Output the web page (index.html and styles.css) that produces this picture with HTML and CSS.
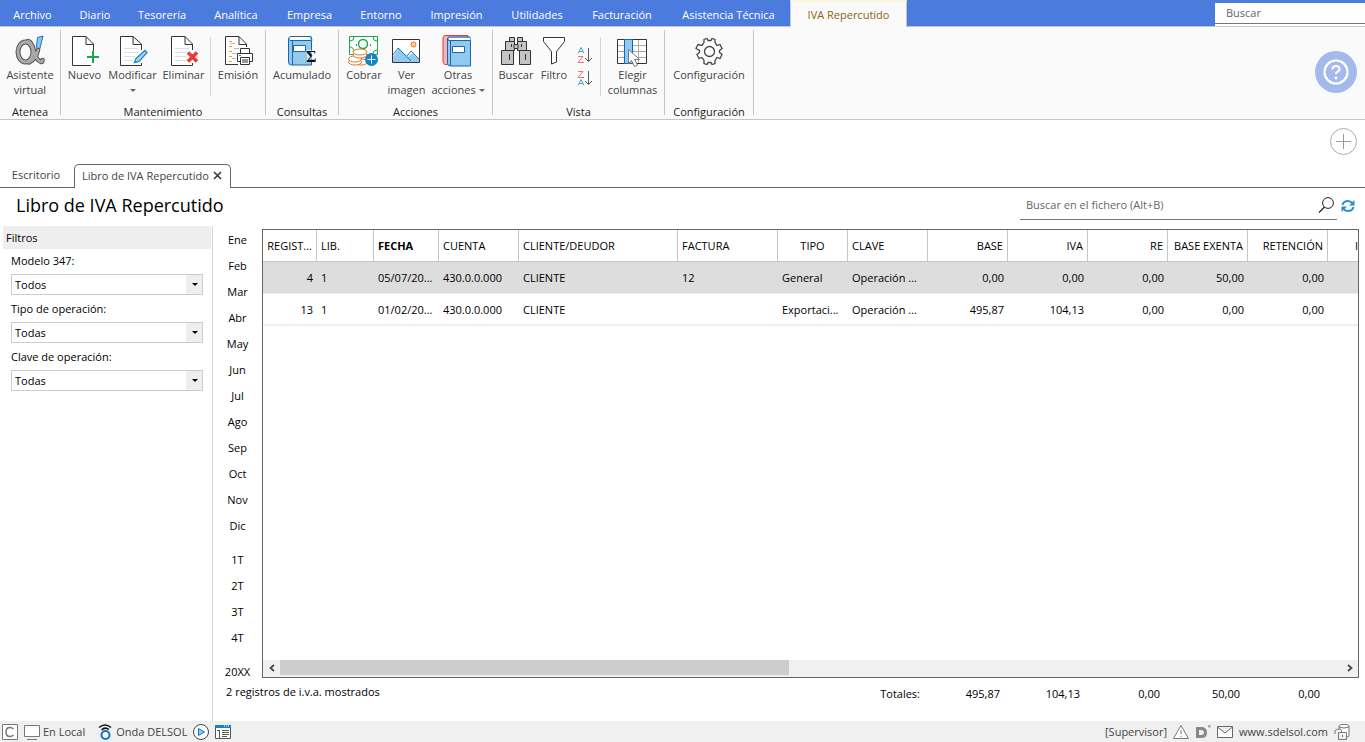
FILE: index.html
```html
<!DOCTYPE html>
<html lang="es">
<head>
<meta charset="utf-8">
<title>Libro de IVA Repercutido</title>
<link rel="stylesheet" href="styles.css">
</head>
<body>
<header class="topbar">
  <nav class="menu">
    <button class="menu-item">Archivo</button>
    <button class="menu-item">Diario</button>
    <button class="menu-item">Tesorería</button>
    <button class="menu-item">Analítica</button>
    <button class="menu-item">Empresa</button>
    <button class="menu-item">Entorno</button>
    <button class="menu-item">Impresión</button>
    <button class="menu-item">Utilidades</button>
    <button class="menu-item">Facturación</button>
    <button class="menu-item">Asistencia Técnica</button>
    <button class="menu-item menu-active">IVA Repercutido</button>
  </nav>
  <input class="top-search" type="text" placeholder="Buscar" aria-label="Buscar">
</header>

<section class="ribbon">
  <div class="group">
    <div class="tools tools-atenea">
      <button class="tool">
        <svg class="icon" viewBox="13 35 32 32"><path d="M36.500 37.500l5.500-1.500-4 16-2.500-5z" fill="#8fc9f0" stroke="#1b75bb"/><g fill="none" stroke-linecap="round"><ellipse cx="24.500" cy="52" rx="7.500" ry="10" stroke="#555" stroke-width="5"/><path d="M27 41q4 1 6 10t7 11q1.500 0 1.500-2M37 50q-2 9-9 12.500" stroke="#555" stroke-width="4.500"/><ellipse cx="24.500" cy="52" rx="7.500" ry="10" stroke="#aaa" stroke-width="3"/><path d="M27 41q4 1 6 10t7 11q1.500 0 1.500-2M37 50q-2 9-9 12.500" stroke="#aaa" stroke-width="2.500"/></g></svg>
        <span>Asistente<br>virtual</span>
      </button>
    </div>
    <h2 class="group-name">Atenea</h2>
  </div>

  <div class="group">
    <div class="tools tools-edit">
      <button class="tool">
        <svg class="icon" viewBox="69 35 32 32"><path d="M91 65.500H72.500V36.500H86L93.500 44V51M86 36.500V44.500H93.500" fill="#fff" stroke="#333"/><path d="M93 51v12M87 57h12" stroke="#17a84b" stroke-width="2"/></svg>
        <span>Nuevo</span>
      </button>
      <button class="tool">
        <svg class="icon" viewBox="116 35 32 32"><path d="M140.500 63V65.500H119.500V36.500H132L140.500 44V50M132 36.500V44.500H140" fill="#fff" stroke="#333"/><path d="M123 48.500h14M123 52.500h14M123 56.500h11M123 60.500h9" stroke="#ddd"/><path d="M133.500 62.500l1.500-4 9-8 2 2-8 9z" fill="#a8d8f5" stroke="#2387c8" stroke-width="1.300"/></svg>
        <span>Modificar</span>
        <i class="caret"></i>
      </button>
      <button class="tool">
        <svg class="icon" viewBox="167 35 32 32"><path d="M191.500 63V65.500H170.500V36.500H184L191.500 44V50M184 36.500V44.500H191" fill="#fff" stroke="#333"/><path d="M174 48.500h14M174 52.500h12M174 56.500h11M174 60.500h12" stroke="#ddd"/><path d="M187 52.500l9 9M196 52.500l-9 9" stroke="#ed3833" stroke-width="3.500"/></svg>
        <span>Eliminar</span>
      </button>
      <i class="divider"></i>
      <button class="tool">
        <svg class="icon" viewBox="222 35 32 32"><path d="M238 64.500H225.500V36.500H239L246.500 44V47M239 36.500V44.500H246" fill="#fff" stroke="#333"/><path d="M229 41.500h3M229 46.500h3M229 51.500h3M229 56.500h3M229 61.500h3" stroke="#f59a23"/><path d="M230 43.500h5M234 48.500h5M232 53.500h5M232 58.500h4" stroke="#bbb"/><path d="M240.500 53V48.500h9V53M240 61.500h-2.500v-8h15v8H250" fill="#fff" stroke="#333"/><path d="M240.500 57.500h9v7h-9zM242 60h6M242 62h6" fill="#fff" stroke="#333"/><path d="M239 55.500h2" stroke="#2387c8"/></svg>
        <span>Emisión</span>
      </button>
    </div>
    <h2 class="group-name">Mantenimiento</h2>
  </div>

  <div class="group">
    <div class="tools tools-single">
      <button class="tool">
        <svg class="icon" viewBox="287 35 32 32"><path d="M289.500 39V62q0 3 3 3H312.500V40.500H291q-2-1-1-3l1-1H312l1 4" fill="#91c9ef" stroke="#1b67ad"/><path d="M291 37h20v3h-20z" fill="#fff"/><path d="M293.500 40v25M294.500 45.500h12v6h-12z" fill="#fff" stroke="#1b67ad"/><path d="M308 50h9v12h-9z" fill="#fff" opacity=".6"/><text class="sigma" x="307" y="62">Σ</text></svg>
        <span>Acumulado</span>
      </button>
    </div>
    <h2 class="group-name">Consultas</h2>
  </div>

  <div class="group">
    <div class="tools tools-actions">
      <button class="tool">
        <svg class="icon" viewBox="348 35 32 32"><path d="M349.500 36.500h28v18h-28z" fill="#fff" stroke="#17a84b"/><circle cx="363" cy="44" r="4.500" fill="none" stroke="#17a84b" stroke-width="1.500"/><path d="M350 41q4 0 4-4M373 37q0 4 4 4M350 47q4 0 4 6M373 54q0-4 4-4" fill="none" stroke="#17a84b"/><path d="M356 45h1M370 45h1" stroke="#17a84b" stroke-width="2"/><g fill="#fff" stroke="#e9792c"><ellipse cx="361" cy="62" rx="6.500" ry="3"/><ellipse cx="355" cy="62" rx="6.500" ry="3"/><ellipse cx="355" cy="59" rx="6.500" ry="3"/><ellipse cx="360" cy="55" rx="7" ry="3"/><ellipse cx="360" cy="52" rx="7" ry="3"/></g><circle cx="371.500" cy="59.500" r="6.500" fill="#1583c6"/><path d="M371.500 55.500v8M367.500 59.500h8" stroke="#fff"/></svg>
        <span>Cobrar</span>
      </button>
      <button class="tool">
        <svg class="icon" viewBox="391 35 32 32"><path d="M392.500 39.500h27v23h-27z" fill="#fff"/><path d="M393 57l6-9 9 9 4-4 7 6v4h-26z" fill="#91c9ef"/><path d="M393 55l5-7 13 13M407 56l4-5 8 8" fill="none" stroke="#1583c6"/><circle cx="413.500" cy="44.500" r="2.500" fill="#fbcf91" stroke="#e9792c"/><path d="M392.500 39.500h27v23h-27z" fill="none" stroke="#333"/></svg>
        <span>Ver<br>imagen</span>
      </button>
      <button class="tool">
        <svg class="icon" viewBox="442 35 32 32"><path d="M449 64.500h-4q-2-1-2-3V38q0-2 2-2.500H468V39h-20z" fill="#f5b5b5" stroke="#e23b3b"/><path d="M447.500 39V63q0 3 3 3H470.500V40.500H449q-3-1-1-3l1-.5H470v4" fill="#91c9ef" stroke="#1b67ad"/><path d="M449 38h21v2h-21z" fill="#fff"/><path d="M450.500 41v25M452.500 46.500h12v6h-12z" fill="#fff" stroke="#1b67ad"/></svg>
        <span>Otras<br>acciones <i class="caret caret-inline"></i></span>
      </button>
    </div>
    <h2 class="group-name">Acciones</h2>
  </div>

  <div class="group">
    <div class="tools tools-view">
      <button class="tool">
        <svg class="icon" viewBox="500 35 32 32"><g fill="#c4c4c4" stroke="#333"><path d="M509.500 37.500h5v4h-5zM517.500 37.500h5v4h-5zM505.500 41.500h9v9h-9zM517.500 41.500h9v9h-9zM501.500 50.500h12v14h-12zM519.500 50.500h11v14h-11z"/><path d="M514 44.500h4v4h-4zM509.500 54v6M525.500 54v6M511.500 44v3M521.500 44v3"/></g></svg>
        <span>Buscar</span>
      </button>
      <button class="tool">
        <svg class="icon" viewBox="539 35 32 32"><path d="M544.500 37.500h21v4l-8 10V62l-5 2V51.500l-8-10z" fill="#fff" stroke="#333"/></svg>
        <span>Filtro</span>
      </button>
      <div class="sorts">
        <button class="sort" aria-label="Orden ascendente"><svg class="sort-icon" viewBox="0 0 16 17"><path d="M1 6.500L4 .5 7 6.500M2 4.500h4" fill="none" stroke="#4da4d9"/><path d="M1 9.500h5l-5 6h6" fill="none" stroke="#ef7474"/><path d="M11.500 1v13M8 11l3.500 3.500L15 11" fill="none" stroke="#555"/></svg></button>
        <button class="sort" aria-label="Orden descendente"><svg class="sort-icon" viewBox="0 0 16 17"><path d="M1 1.500h5l-5 6h6" fill="none" stroke="#ef7474"/><path d="M1 15.500L4 9.500l3 6M2 13.500h4" fill="none" stroke="#4da4d9"/><path d="M11.500 1v13M8 11l3.500 3.500L15 11" fill="none" stroke="#555"/></svg></button>
      </div>
      <i class="divider"></i>
      <button class="tool">
        <svg class="icon" viewBox="617 35 32 32"><path d="M617.500 39.500h29v24h-29z" fill="#fff"/><path d="M618 45.500h29M618 51.500h29M618 57.500h29M638.500 39v25" stroke="#aaa"/><path d="M617.500 39.500h29v24h-29z" fill="none" stroke="#333"/><path d="M624.500 39.500h8v24h-8z" fill="#91c9ef" stroke="#1b67ad"/><path d="M628.500 49.500v14l3-3 3 6 3-1.500-3-5.500h5z" fill="#fff" stroke="#777"/></svg>
        <span>Elegir<br>columnas</span>
      </button>
    </div>
    <h2 class="group-name">Vista</h2>
  </div>

  <div class="group">
    <div class="tools tools-config">
      <button class="tool">
        <svg class="icon" viewBox="0 0 32 32"><path d="M11 7.500V4.500L14 3.500 15 5.500h3l1-2 3 1v3l2 3 3-1 2 4-2.500 2v2l2.500 2-2 4-3-1-2 3v3l-3 1-1-2h-3l-1 2-3-1v-3l-2-3-3 1-2-4L6.500 17.500v-2L3 13.500l2-4 4 1z" fill="#fff" stroke="#444" stroke-width="1.300"/><circle cx="16.500" cy="16.500" r="5" fill="none" stroke="#444" stroke-width="1.300"/></svg>
        <span>Configuración</span>
      </button>
    </div>
    <h2 class="group-name">Configuración</h2>
  </div>

  <button class="help" aria-label="Ayuda"><svg class="help-icon" viewBox="0 0 26 26"><circle cx="13" cy="13" r="11.500" fill="none" stroke="#fff" stroke-width="2.200"/><path d="M9.500 10.500q0-3.500 3.500-3.500t3.500 3q0 2-2 2.800-1.500.7-1.500 2.200" fill="none" stroke="#fff" stroke-width="2.200"/><circle cx="13" cy="19" r="1.400" fill="#fff"/></svg></button>
</section>

<section class="tabstrip">
  <div class="tabs">
    <button class="tab">Escritorio</button>
    <button class="tab tab-active">Libro de IVA Repercutido <svg class="close" viewBox="0 0 9 9"><path d="M1 1l7 7M8 1L1 8" stroke="#333" stroke-width="1.500"/></svg></button>
  </div>
  <button class="add" aria-label="Añadir"><svg class="add-icon" viewBox="0 0 27 27"><circle cx="13.500" cy="13.500" r="13" fill="none" stroke="#aaa"/><path d="M13.500 6v15M6 13.500h15" stroke="#999"/></svg></button>
</section>

<section class="heading">
  <h1 class="title">Libro de IVA Repercutido</h1>
  <div class="file-search">
    <input class="file-input" type="text" placeholder="Buscar en el fichero (Alt+B)" aria-label="Buscar en el fichero">
    <svg class="lens" viewBox="0 0 16 16"><circle cx="10" cy="6" r="5.400" fill="none" stroke="#222"/><path d="M6.500 10L1 15.500" stroke="#222" stroke-width="1.300"/></svg>
  </div>
  <button class="refresh" aria-label="Actualizar"><svg class="refresh-icon" viewBox="0 0 14 14"><path d="M1.500 6Q2.500 2 7 2q2.500 0 4.500 2.200M12.500 8Q11.500 12 7 12q-2.500 0-4.500-2.200" fill="none" stroke="#2490d0" stroke-width="2"/><path d="M13.500 1v5.500H8zM.5 13V7.500H6z" fill="#2490d0"/></svg></button>
</section>

<main class="main">
  <aside class="filters">
    <h2 class="filters-title">Filtros</h2>
    <div class="field">
      <label class="field-label" for="modelo">Modelo 347:</label>
      <div class="select-box"><select class="select" id="modelo"><option>Todos</option></select></div>
    </div>
    <div class="field">
      <label class="field-label" for="tipo">Tipo de operación:</label>
      <div class="select-box"><select class="select" id="tipo"><option>Todas</option></select></div>
    </div>
    <div class="field">
      <label class="field-label" for="clave">Clave de operación:</label>
      <div class="select-box"><select class="select" id="clave"><option>Todas</option></select></div>
    </div>
  </aside>

  <section class="content">
    <nav class="periods">
      <div class="period-set">
        <button class="period">Ene</button>
        <button class="period">Feb</button>
        <button class="period">Mar</button>
        <button class="period">Abr</button>
        <button class="period">May</button>
        <button class="period">Jun</button>
        <button class="period">Jul</button>
        <button class="period">Ago</button>
        <button class="period">Sep</button>
        <button class="period">Oct</button>
        <button class="period">Nov</button>
        <button class="period">Dic</button>
      </div>
      <div class="period-set">
        <button class="period">1T</button>
        <button class="period">2T</button>
        <button class="period">3T</button>
        <button class="period">4T</button>
      </div>
      <div class="period-set">
        <button class="period">20XX</button>
      </div>
    </nav>

    <div class="grid">
      <div class="grid-view">
        <table class="book">
          <colgroup>
            <col class="c-reg"><col class="c-lib"><col class="c-date"><col class="c-std"><col class="c-client"><col class="c-invoice"><col class="c-type"><col class="c-std"><col class="c-std"><col class="c-std"><col class="c-std"><col class="c-std"><col class="c-std"><col class="c-std">
          </colgroup>
          <thead>
            <tr><th class="num">REGIST...</th><th>LIB.</th><th class="sorted">FECHA</th><th>CUENTA</th><th>CLIENTE/DEUDOR</th><th>FACTURA</th><th class="mid">TIPO</th><th>CLAVE</th><th class="num">BASE</th><th class="num">IVA</th><th class="num">RE</th><th class="num">BASE EXENTA</th><th class="num">RETENCIÓN</th><th class="last">I</th></tr>
          </thead>
          <tbody>
            <tr class="selected"><td class="num">4</td><td>1</td><td>05/07/20...</td><td>430.0.0.000</td><td>CLIENTE</td><td>12</td><td>General</td><td>Operación ...</td><td class="num">0,00</td><td class="num">0,00</td><td class="num">0,00</td><td class="num">50,00</td><td class="num">0,00</td><td></td></tr>
            <tr><td class="num">13</td><td>1</td><td>01/02/20...</td><td>430.0.0.000</td><td>CLIENTE</td><td></td><td>Exportaci...</td><td>Operación ...</td><td class="num">495,87</td><td class="num">104,13</td><td class="num">0,00</td><td class="num">0,00</td><td class="num">0,00</td><td></td></tr>
          </tbody>
        </table>
      </div>
      <div class="scrollbar">
        <button class="arrow" aria-label="Izquierda"><svg class="arrow-icon" viewBox="0 0 8 8"><path d="M6 1L2.500 4 6 7" fill="none" stroke="#444" stroke-width="1.700"/></svg></button>
        <div class="track"><div class="thumb"></div></div>
        <button class="arrow" aria-label="Derecha"><svg class="arrow-icon" viewBox="0 0 8 8"><path d="M2 1l3.500 3L2 7" fill="none" stroke="#444" stroke-width="1.700"/></svg></button>
      </div>
    </div>

    <footer class="totals">
      <p class="count">2 registros de i.v.a. mostrados</p>
      <div class="sums"><span>Totales:</span><span>495,87</span><span>104,13</span><span>0,00</span><span>50,00</span><span>0,00</span></div>
    </footer>
  </section>
</main>

<footer class="status">
  <div class="status-left">
    <svg class="s-icon" viewBox="0 0 16 16"><path d="M.5.5h15v15H.5z" fill="#fff" stroke="#777"/><path d="M11.500 5Q10 3.500 8 3.500 4 3.500 4 8t4 4.500q2 0 3.500-1.500" fill="none" stroke="#777" stroke-width="1.500"/></svg>
    <span class="status-item"><svg class="s-icon" viewBox="0 0 16 16"><path d="M.5 1.500h15v11H.5z" fill="#fff" stroke="#777"/><path d="M3 15.500h10" stroke="#777"/></svg>En Local</span>
    <span class="status-item onda"><svg class="s-icon" viewBox="0 0 16 16"><path d="M2 3.500Q8-1.500 14 3.500M4.500 6Q8 2.500 12 5.500" fill="none" stroke="#111" stroke-width="1.500"/><circle cx="8.500" cy="11" r="4" fill="#fff" stroke="#0877c9" stroke-width="2"/></svg>Onda DELSOL</span>
    <svg class="s-icon" viewBox="0 0 16 16"><circle cx="8" cy="8" r="7.500" fill="#fff" stroke="#444"/><path d="M5.500 4.500v7l6-3.500z" fill="#91c9ef" stroke="#0877c9"/></svg>
    <svg class="s-icon" viewBox="0 0 16 16"><path d="M.5 1.500h15v13H.5z" fill="#fff" stroke="#555"/><path d="M0 1h16v3H0z" fill="#1583c6"/><path d="M9 2h1M11 2h1M13 2h1" stroke="#fff"/><path d="M2 6.500h3M4.500 6v8M7 6.500h7M7 8.500h7M7 10.500h7M7 12.500h5" stroke="#555"/></svg>
  </div>
  <div class="status-right">
    <span>[Supervisor]</span>
    <svg class="s-icon" viewBox="0 0 16 16"><path d="M8 1.500L15.500 14.500H.5z" fill="#fff" stroke="#777"/><path d="M8 6v4M8 12v1" stroke="#777"/></svg>
    <svg class="s-icon" viewBox="0 0 16 16"><path d="M2.500 4.500H6q4.500 0 4.500 4t-4.500 4H2.500z" fill="none" stroke="#888" stroke-width="3"/><path d="M13 1h2.500v2.500H13z" fill="#aaa"/></svg>
    <svg class="s-icon" viewBox="0 0 16 16"><path d="M.5 2.500h15v11H.5zM.5 3L8 9l7.500-6" fill="#fff" stroke="#666"/></svg>
    <a class="site" href="#">www.sdelsol.com</a>
    <svg class="s-icon" viewBox="0 0 16 16"><path d="M5 5.500V2Q5 .5 10 .5T15 2v10q0 1-3 1" fill="#fff" stroke="#777"/><path d="M5 3q5 2 10 0M4.500 8.500h8v7h-8zM7.500 8V6.500q0-1.500-2-1.500T1 6.500V10M8.500 11v2" fill="none" stroke="#777"/></svg>
  </div>
</footer>
</body>
</html>
```

FILE: styles.css
```css
* { box-sizing: border-box; }

body {
  margin: 0;
  min-height: 100vh;
  display: flex;
  flex-direction: column;
  font: 11px/15px "Open Sans", "Noto Sans", sans-serif;
  color: #000;
  background: #fff;
}

button, input, select { font: inherit; color: inherit; }
button { padding: 0; border: 0; background: none; }
h1, h2, p { margin: 0; font-weight: 400; }
svg { display: block; flex: none; }

.topbar {
  display: flex;
  justify-content: space-between;
  height: 27px;
  background: #4b7bdc;
  border-bottom: 1px solid #c6c6c6;
}
.menu {
  display: grid;
  grid-template-columns: 65px 60px 74px 74px 73px 70px 81px 80px 90px 123px 117px;
}
.menu-item { padding-top: 3px; color: #fff; white-space: nowrap; }
.menu-active {
  margin-bottom: -1px;
  padding-top: 0;
  color: #8a6410;
  background: #fafafa;
  border: 1px solid #c6c6c6;
  border-top: 2px solid #fcf6dc;
  border-bottom: 0;
}
.top-search {
  width: 150px;
  margin-top: 3px;
  padding: 0 11px 5px;
  border: 0;
  border-radius: 0;
  background: linear-gradient(#777, #777) 0 20px / 100% 1px no-repeat #fff;
}
::placeholder { color: #666; opacity: 1; }

.ribbon {
  display: flex;
  height: 93px;
  padding: 3px 0 4px;
  background: #fafafa;
  border-bottom: 1px solid #c6c6c6;
  color: #444;
}
.group {
  display: flex;
  flex-direction: column;
  justify-content: space-between;
  border-right: 1px solid #c6c6c6;
}
.group-name { margin-bottom: -4px; font-size: 11px; text-align: center; color: #222; }
.tools { display: grid; padding-top: 5px; }
.tools-atenea { grid-template-columns: 60px; }
.tools-edit { grid-template-columns: 47px 49px 53px 1px 54px; }
.tools-single { grid-template-columns: 72px; }
.tools-actions { grid-template-columns: 50px 35px 68px; }
.tools-view { grid-template-columns: 46px 30px 31px 1px 63px; }
.tools-config { grid-template-columns: 88px; }
.tool { display: flex; flex-direction: column; align-items: center; white-space: nowrap; }
.icon { width: 32px; height: 32px; }
.sigma { font: bold 16px "Liberation Serif", serif; fill: #111; }
.divider { height: 59px; margin-top: 2px; background: #d5d5d5; }
.caret {
  margin-top: 7px;
  border: 3px solid transparent;
  border-top-color: #666;
  border-bottom: 0;
}
.caret-inline { display: inline-block; margin: 0 0 2px; }
.sorts { display: flex; flex-direction: column; align-items: center; gap: 6px; padding-top: 12px; }
.sort-icon { width: 16px; height: 17px; }
.help {
  display: grid;
  place-items: center;
  width: 42px;
  height: 42px;
  margin: 21px 8px 0 auto;
  border-radius: 50%;
  background: #a5baec;
}
.help-icon { width: 26px; height: 26px; }

.tabstrip {
  display: flex;
  justify-content: space-between;
  height: 68px;
  padding-right: 8px;
  border-bottom: 1px solid #666;
  color: #444;
}
.tabs { display: flex; align-items: flex-end; }
.tab { width: 72px; height: 24px; padding-bottom: 2px; white-space: nowrap; }
.tab-active {
  display: flex;
  align-items: center;
  justify-content: space-between;
  width: 157px;
  margin: 0 0 -1px 2px;
  padding: 0 8px 3px 7px;
  background: #fff;
  border: 1px solid #666;
  border-bottom: 0;
  border-radius: 5px 5px 0 0;
}
.close { width: 9px; height: 9px; }
.add { align-self: flex-start; margin-top: 8px; }
.add-icon { width: 27px; height: 27px; }

.heading { display: flex; height: 38px; padding: 0 10px 0 16px; }
.title { font-size: 18px; line-height: 35px; }
.file-search {
  display: flex;
  align-items: center;
  width: 317px;
  height: 32px;
  margin-left: auto;
  padding: 2px 3px 0 6px;
  border-bottom: 1px solid #777;
}
.file-input { flex: 1; min-width: 0; padding: 0; border: 0; background: none; }
.lens { width: 16px; height: 16px; }
.refresh { height: 36px; margin-left: 4px; }
.refresh-icon { width: 14px; height: 14px; }

.main { flex: 1; display: flex; }
.filters {
  width: 213px;
  padding: 0 1px 0 3px;
  border-right: 1px solid #d5d5d5;
}
.filters-title {
  padding-left: 3px;
  font-size: 11px;
  line-height: 23px;
  background: #eee;
}
.field { height: 48px; padding: 0 8px; }
.field-label { display: block; padding-bottom: 2px; line-height: 23px; }
.select-box { position: relative; }
.select {
  display: block;
  width: 100%;
  height: 21px;
  padding: 0 3px;
  appearance: none;
  border: 1px solid #ccc;
  border-radius: 0;
  background: linear-gradient(#eee, #eee) right / 16px 100% no-repeat #fff;
}
.select-box::after {
  content: "";
  position: absolute;
  top: 9px;
  right: 5px;
  border: 3px solid transparent;
  border-top-color: #000;
  border-bottom: 0;
  pointer-events: none;
}

.content {
  flex: 1;
  min-width: 0;
  display: grid;
  grid-template-columns: 49px minmax(0, 1fr);
  grid-template-rows: 1fr 43px;
  padding: 3px 6px 0 0;
}
.periods { display: flex; flex-direction: column; gap: 8px; margin: -3px 0 -8px; }
.period-set { display: grid; }
.period { height: 26px; }

.grid { display: flex; flex-direction: column; border: 1px solid #666; }
.grid-view { flex: 1; overflow: hidden; }
.book { width: 1144px; table-layout: fixed; border-collapse: separate; border-spacing: 0; }
.c-reg { width: 54px; }
.c-lib { width: 57px; }
.c-date { width: 65px; }
.c-client { width: 159px; }
.c-invoice { width: 100px; }
.c-type { width: 70px; }
.c-std { width: 80px; }
.book th, .book td {
  height: 32px;
  padding: 0 4px;
  overflow: hidden;
  white-space: nowrap;
  text-align: left;
  font-weight: 400;
}
.book th { border-right: 1px solid #c6c6c6; border-bottom: 1px solid #c6c6c6; }
.book td { border-bottom: 2px solid #eee; }
.book .selected td { background: #ddd; border-bottom-width: 1px; }
.book .num { text-align: right; }
.book .mid { text-align: center; }
.book .sorted { font-weight: 700; }
.book .last { padding-left: 27px; }

.scrollbar { display: flex; height: 17px; background: #f0f0f0; padding-bottom: 1px; }
.arrow { display: grid; place-items: center; width: 17px; }
.arrow-icon { width: 8px; height: 8px; }
.track { flex: 1; }
.thumb { width: 48%; height: 15px; background: #cdcdcd; }

.totals {
  grid-column: 1 / -1;
  display: flex;
  justify-content: space-between;
  padding: 6px 39px 0 13px;
}
.sums {
  display: grid;
  grid-template-columns: repeat(6, 80px);
  padding-top: 2px;
  text-align: right;
}

.status {
  display: flex;
  justify-content: space-between;
  align-items: center;
  height: 21px;
  padding: 0 15px 0 2px;
  background: #f0f0f0;
  color: #444;
}
.status-left, .status-right { display: flex; align-items: center; gap: 6px; }
.status-item { display: flex; align-items: center; gap: 3px; }
.onda { margin-left: 6px; }
.s-icon { width: 16px; height: 16px; }
.site { color: inherit; text-decoration: none; }
```
